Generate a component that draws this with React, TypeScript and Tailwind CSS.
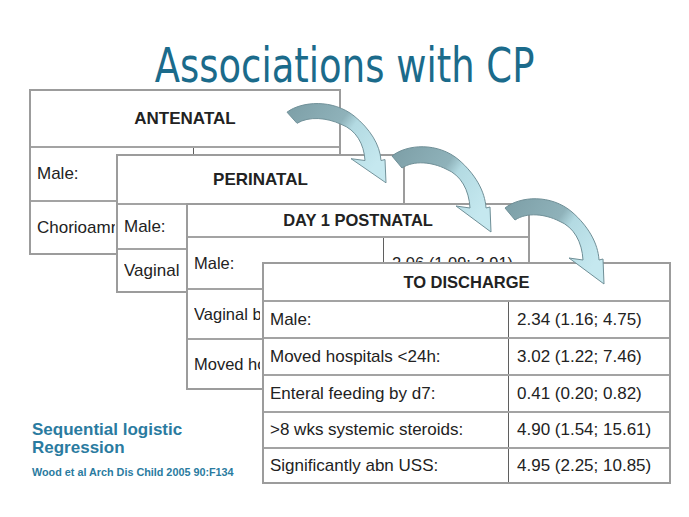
import React from 'react';

/**
 * Slide: Associations with CP
 * Overlapping staged tables with curved arrows between them
 */

type Row = { label: string; value?: string };

interface StageTableProps {
  title: string;
  rows: Row[];
  boxClass: string;
  headClass: string;
  rowClasses: string[];
  labelClass: string;
  clipClass?: string;
}

function StageTable({ title, rows, boxClass, headClass, rowClasses, labelClass, clipClass }: StageTableProps) {
  return (
    <div className={`absolute flex flex-col bg-white border-2 border-[#9c9c9c] text-[#222] ${boxClass}`}>
      <div className={`flex items-center justify-center font-bold ${headClass}`}>{title}</div>
      {rows.map((row, i) => (
        <div key={row.label} className={`flex border-t-2 border-[#a3a3a3] ${rowClasses[i]}`}>
          <div className={`flex items-center pl-[6px] border-r border-[#5f5f5f] ${labelClass}`}>
            {/* label is cut where the next table lies over it */}
            <span className={`whitespace-nowrap overflow-hidden ${clipClass ?? ''}`}>{row.label}</span>
          </div>
          <div className="flex flex-1 items-center pl-[8px] whitespace-nowrap overflow-hidden">{row.value}</div>
        </div>
      ))}
    </div>
  );
}

function CurvedArrow({ transform }: { transform: string }) {
  return (
    <g transform={transform}>
      <path
        d="M 0 12 C 15 0, 46 -2, 67 16 C 83 30, 93 47, 94 64 L 98 63 L 99 88 L 64 62 L 78 64 C 77 46, 69 31, 54 25 C 40 18, 22 16, 10 24 Z"
        fill="url(#arrowFill)"
        stroke="#6f8f97"
        strokeWidth="1"
        strokeLinejoin="round"
      />
    </g>
  );
}

const antenatal: Row[] = [{ label: 'Male:' }, { label: 'Chorioamnionitis:' }];

const perinatal: Row[] = [{ label: 'Male:' }, { label: 'Vaginal breech:' }];

const day1: Row[] = [
  { label: 'Male:', value: '2.06 (1.09; 3.91)' },
  { label: 'Vaginal breech:' },
  { label: 'Moved hospitals <24h:' },
];

const discharge: Row[] = [
  { label: 'Male:', value: '2.34 (1.16; 4.75)' },
  { label: 'Moved hospitals <24h:', value: '3.02 (1.22; 7.46)' },
  { label: 'Enteral feeding by d7:', value: '0.41 (0.20; 0.82)' },
  { label: '>8 wks systemic steroids:', value: '4.90 (1.54; 15.61)' },
  { label: 'Significantly abn USS:', value: '4.95 (2.25; 10.85)' },
];

export default function App() {
  return (
    <div className="relative w-[689px] h-[517px] overflow-hidden bg-white font-['Liberation_Sans',Arial,sans-serif]">
      <div className="flex justify-center pt-[35px]">
        <h1 className="inline-block scale-x-[0.77] font-['DejaVu_Sans',sans-serif] text-[48px] leading-[60px] text-[#1b6b8b] whitespace-nowrap">
          Associations with CP
        </h1>
      </div>

      <StageTable
        title="ANTENATAL"
        rows={antenatal}
        boxClass="left-[29px] top-[89px] w-[312px] h-[166px] text-[17px]"
        headClass="h-[55px]"
        rowClasses={['h-[54px]', 'flex-1']}
        labelClass="w-[163px]"
        clipClass="max-w-[78px]"
      />
      <StageTable
        title="PERINATAL"
        rows={perinatal}
        boxClass="left-[116px] top-[154px] w-[289px] h-[139px] text-[17px]"
        headClass="h-[47px]"
        rowClasses={['h-[45px]', 'flex-1']}
        labelClass="w-[138px]"
        clipClass="max-w-[60px]"
      />
      <StageTable
        title="DAY 1 POSTNATAL"
        rows={day1}
        boxClass="left-[186px] top-[203px] w-[344px] h-[187px] text-[16.5px]"
        headClass="h-[31px]"
        rowClasses={['h-[52px]', 'h-[50px]', 'flex-1']}
        labelClass="w-[196px]"
        clipClass="max-w-[66px]"
      />
      <StageTable
        title="TO DISCHARGE"
        rows={discharge}
        boxClass="left-[262px] top-[262px] w-[409px] h-[222px] text-[17px]"
        headClass="h-[36px] text-[16.5px]"
        rowClasses={['h-[37px]', 'h-[37px]', 'h-[37px]', 'h-[36px]', 'flex-1']}
        labelClass="w-[245px]"
      />

      <svg className="absolute inset-0 pointer-events-none" width="689" height="517" viewBox="0 0 689 517">
        <defs>
          <linearGradient id="arrowFill" x1="0" y1="0" x2="1" y2="0.6">
            <stop offset="0" stopColor="#7c9ea6" />
            <stop offset="0.5" stopColor="#8fb2ba" />
            <stop offset="0.62" stopColor="#b3dae2" />
            <stop offset="1" stopColor="#c5e8ef" />
          </linearGradient>
        </defs>
        <CurvedArrow transform="translate(287 101) scale(1 0.93)" />
        <CurvedArrow transform="translate(392 144)" />
        <CurvedArrow transform="translate(505 196)" />
      </svg>

      <div className="absolute left-[32px] top-[421px] text-[#2a7ba0] font-bold">
        <p className="text-[17px] leading-[18px]">Sequential logistic</p>
        <p className="text-[17px] leading-[18px]">Regression</p>
        <p className="mt-[9px] text-[10.8px] leading-[12px]">Wood et al Arch Dis Child 2005 90:F134</p>
      </div>
    </div>
  );
}
